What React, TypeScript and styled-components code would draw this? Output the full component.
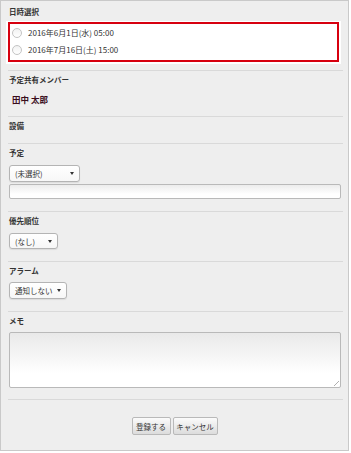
import React from 'react'
import styled, { createGlobalStyle } from 'styled-components'

const GlobalStyle = createGlobalStyle`
    html, body {
        margin: 0;
        padding: 0;
        background: #ffffff;
    }
    body {
        font-family: 'Noto Sans CJK JP', 'Liberation Sans', sans-serif;
        color: #333333;
    }
`

const Panel = styled.div`
    width: 349px;
    height: 451px;
    box-sizing: border-box;
    border: 1px solid #c9c9c9;
    background: #eeeeee;
    padding: 0 5px 0 7px;
    display: flex;
    flex-direction: column;
`

const Section = styled.section<{ top?: number; bottom?: number }>`
    padding-top: ${props => props.top ?? 4}px;
    padding-bottom: ${props => props.bottom ?? 12}px;
    border-bottom: 1px solid #d9d9d9;
    display: flex;
    flex-direction: column;
`

const Label = styled.div`
    height: 10px;
    line-height: 10px;
    font-size: 7.5px;
    font-weight: 700;
    color: #333333;
    padding-left: 1px;
`

const Content = styled.div<{ mt?: number }>`
    margin-top: ${props => props.mt ?? 7}px;
    display: flex;
    flex-direction: column;
    align-items: flex-start;
    gap: 2px;
`

const ChoiceFrame = styled.div`
    align-self: stretch;
    margin: 0 2px 0 -2px;
    background: #ffffff;
    padding: 1px 2px 2px;
`

const ChoiceBox = styled.div`
    border: 2px solid #d7000f;
    padding: 0 0 2px;
`

const ChoiceRow = styled.label`
    height: 17px;
    display: flex;
    align-items: center;
    gap: 6px;
    padding-left: 2px;
    font-size: 8px;
    color: #333333;
`

const Radio = styled.span`
    width: 10px;
    height: 10px;
    box-sizing: border-box;
    border-radius: 50%;
    border: 1px solid #c4c4c4;
    background: linear-gradient(#f2f2f2, #ffffff);
`

const Member = styled.div`
    height: 12px;
    line-height: 12px;
    padding-left: 4px;
    font-size: 8.5px;
    font-weight: 700;
    color: #3a0d1c;
`

const SelectBox = styled.div<{ w: number; h?: number }>`
    width: ${props => props.w}px;
    height: ${props => props.h ?? 17}px;
    box-sizing: border-box;
    margin-left: 1px;
    border: 1px solid #b4b4b4;
    border-radius: 3px;
    background: linear-gradient(#ffffff, #f7f7f7);
    box-shadow: 0 1px 1px rgba(0, 0, 0, 0.08);
    display: flex;
    align-items: center;
    justify-content: space-between;
    padding: 0 5px 0 5px;
    font-size: 7.5px;
    color: #333333;
`

const Arrow = styled.span`
    width: 0;
    height: 0;
    border-left: 2px solid transparent;
    border-right: 2px solid transparent;
    border-top: 3px solid #333333;
`

const TextInput = styled.div`
    align-self: stretch;
    margin: 0 2px 0 1px;
    height: 15px;
    box-sizing: border-box;
    border: 1px solid #b9b9b9;
    border-radius: 2px;
    background: linear-gradient(#ececec, #ffffff 70%);
`

const TextArea = styled.div`
    align-self: stretch;
    margin: 0 2px 0 1px;
    height: 56px;
    box-sizing: border-box;
    border: 1px solid #b9b9b9;
    border-radius: 2px;
    background: linear-gradient(#e9e9e9, #ffffff 75%);
    position: relative;
`

const Grip = styled.span`
    position: absolute;
    right: 1px;
    bottom: 1px;
    width: 5px;
    height: 5px;
    background: linear-gradient(135deg, transparent 45%, #b0b0b0 45%, #b0b0b0 55%, transparent 55%);
`

const Footer = styled.div`
    padding-top: 17px;
    display: flex;
    justify-content: center;
    gap: 2px;
    margin-left: -2px;
`

const Button = styled.button<{ w: number }>`
    width: ${props => props.w}px;
    height: 18px;
    box-sizing: border-box;
    padding: 0;
    border: 1px solid #b9b9b9;
    border-radius: 2px;
    background: linear-gradient(#fbfbfb, #dcdcdc);
    font-family: 'Noto Sans CJK JP', 'Liberation Sans', sans-serif;
    font-size: 7.5px;
    color: #333333;
`

const dates = ['2016年6月1日(水) 05:00', '2016年7月16日(土) 15:00']

function App() {
    return (
        <>
            <GlobalStyle />
            <Panel>
                <Section top={6} bottom={6}>
                    <Label>日時選択</Label>
                    <Content mt={4}>
                        <ChoiceFrame>
                            <ChoiceBox>
                                {dates.map(d => (
                                    <ChoiceRow key={d}>
                                        <Radio />
                                        {d}
                                    </ChoiceRow>
                                ))}
                            </ChoiceBox>
                        </ChoiceFrame>
                    </Content>
                </Section>
                <Section bottom={11}>
                    <Label>予定共有メンバー</Label>
                    <Content mt={8}>
                        <Member>田中 太郎</Member>
                    </Content>
                </Section>
                <Section>
                    <Label>設備</Label>
                </Section>
                <Section>
                    <Label>予定</Label>
                    <Content>
                        <SelectBox w={71}>
                            (未選択)
                            <Arrow />
                        </SelectBox>
                        <TextInput />
                    </Content>
                </Section>
                <Section>
                    <Label>優先順位</Label>
                    <Content>
                        <SelectBox w={49} h={16}>
                            (なし)
                            <Arrow />
                        </SelectBox>
                    </Content>
                </Section>
                <Section>
                    <Label>アラーム</Label>
                    <Content mt={6}>
                        <SelectBox w={58}>
                            通知しない
                            <Arrow />
                        </SelectBox>
                    </Content>
                </Section>
                <Section bottom={11}>
                    <Label>メモ</Label>
                    <Content mt={6}>
                        <TextArea>
                            <Grip />
                        </TextArea>
                    </Content>
                </Section>
                <Footer>
                    <Button w={39}>登録する</Button>
                    <Button w={45}>キャンセル</Button>
                </Footer>
            </Panel>
        </>
    )
}

export default App
